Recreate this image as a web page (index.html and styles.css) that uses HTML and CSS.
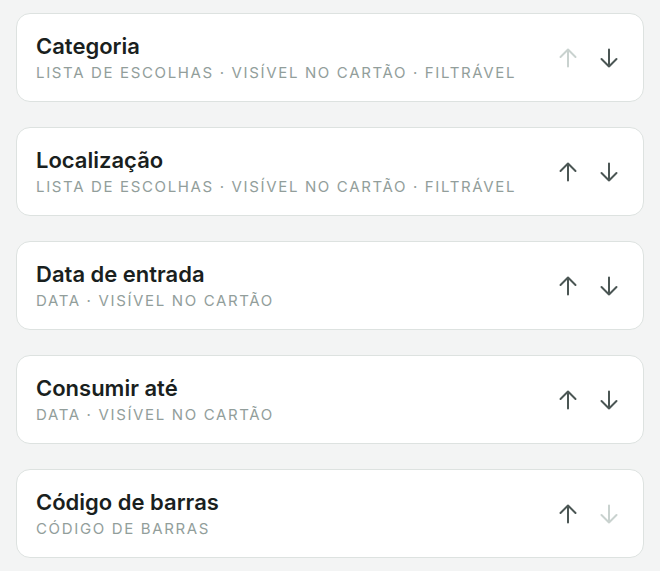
FILE: index.html
```html
<!DOCTYPE html>
<html lang="pt">
<head>
    <meta charset="UTF-8" />
    <meta name="viewport" content="width=device-width, initial-scale=1.0" />
    <title>Campos</title>
    <link rel="stylesheet" href="styles.css">
</head>
<body>
    <div class="field-list">
        <div class="field-card">
            <div class="field-text">
                <h3>Categoria</h3>
                <p>Lista de escolhas · Visível no cartão · Filtrável</p>
            </div>
            <div class="field-moves">
                <button class="move disabled" aria-label="Subir">
                    <svg viewBox="0 0 20 20"><path d="M10 18.5V1.5M2.5 9l7.5-7.5 7.5 7.5"/></svg>
                </button>
                <button class="move" aria-label="Descer">
                    <svg viewBox="0 0 20 20"><path d="M10 1.5v17M2.5 11l7.5 7.5 7.5-7.5"/></svg>
                </button>
            </div>
        </div>

        <div class="field-card">
            <div class="field-text">
                <h3>Localização</h3>
                <p>Lista de escolhas · Visível no cartão · Filtrável</p>
            </div>
            <div class="field-moves">
                <button class="move" aria-label="Subir">
                    <svg viewBox="0 0 20 20"><path d="M10 18.5V1.5M2.5 9l7.5-7.5 7.5 7.5"/></svg>
                </button>
                <button class="move" aria-label="Descer">
                    <svg viewBox="0 0 20 20"><path d="M10 1.5v17M2.5 11l7.5 7.5 7.5-7.5"/></svg>
                </button>
            </div>
        </div>

        <div class="field-card">
            <div class="field-text">
                <h3>Data de entrada</h3>
                <p>Data · Visível no cartão</p>
            </div>
            <div class="field-moves">
                <button class="move" aria-label="Subir">
                    <svg viewBox="0 0 20 20"><path d="M10 18.5V1.5M2.5 9l7.5-7.5 7.5 7.5"/></svg>
                </button>
                <button class="move" aria-label="Descer">
                    <svg viewBox="0 0 20 20"><path d="M10 1.5v17M2.5 11l7.5 7.5 7.5-7.5"/></svg>
                </button>
            </div>
        </div>

        <div class="field-card">
            <div class="field-text">
                <h3>Consumir até</h3>
                <p>Data · Visível no cartão</p>
            </div>
            <div class="field-moves">
                <button class="move" aria-label="Subir">
                    <svg viewBox="0 0 20 20"><path d="M10 18.5V1.5M2.5 9l7.5-7.5 7.5 7.5"/></svg>
                </button>
                <button class="move" aria-label="Descer">
                    <svg viewBox="0 0 20 20"><path d="M10 1.5v17M2.5 11l7.5 7.5 7.5-7.5"/></svg>
                </button>
            </div>
        </div>

        <div class="field-card">
            <div class="field-text">
                <h3>Código de barras</h3>
                <p>Código de barras</p>
            </div>
            <div class="field-moves">
                <button class="move" aria-label="Subir">
                    <svg viewBox="0 0 20 20"><path d="M10 18.5V1.5M2.5 9l7.5-7.5 7.5 7.5"/></svg>
                </button>
                <button class="move disabled" aria-label="Descer">
                    <svg viewBox="0 0 20 20"><path d="M10 1.5v17M2.5 11l7.5 7.5 7.5-7.5"/></svg>
                </button>
            </div>
        </div>
    </div>
</body>
</html>
```

FILE: styles.css
```css
body {
    margin: 0;
    font-family: 'Inter', 'Noto Sans', sans-serif;
    background-color: #f3f4f4;
    color: #1a1f1e;
}

.field-list {
    display: flex;
    flex-direction: column;
    gap: 25px;
    padding: 13px 16px 0 16px;
}

.field-card {
    display: flex;
    align-items: center;
    height: 87px;
    padding: 0 24px 0 19px;
    background-color: #fff;
    border: 1px solid #dde2e0;
    border-radius: 14px;
}

.field-text {
    flex: 1;
}

.field-text h3 {
    margin: 0;
    font-size: 22px;
    font-weight: 600;
    letter-spacing: 0;
    line-height: 26px;
}

.field-text p {
    margin: 4px 0 0 0;
    font-size: 15px;
    font-weight: 400;
    line-height: 20px;
    text-transform: uppercase;
    letter-spacing: 1.65px;
    color: #929e9b;
}

.field-moves {
    display: flex;
    gap: 21px;
}

.move {
    width: 20px;
    height: 20px;
    padding: 0;
    border: none;
    background: none;
    color: #4b5654;
    cursor: pointer;
}

.move svg {
    display: block;
    width: 20px;
    height: 20px;
    fill: none;
    stroke: currentColor;
    stroke-width: 2;
    stroke-linecap: round;
    stroke-linejoin: round;
}

.move.disabled {
    color: #c9d2cf;
    cursor: default;
}
```
